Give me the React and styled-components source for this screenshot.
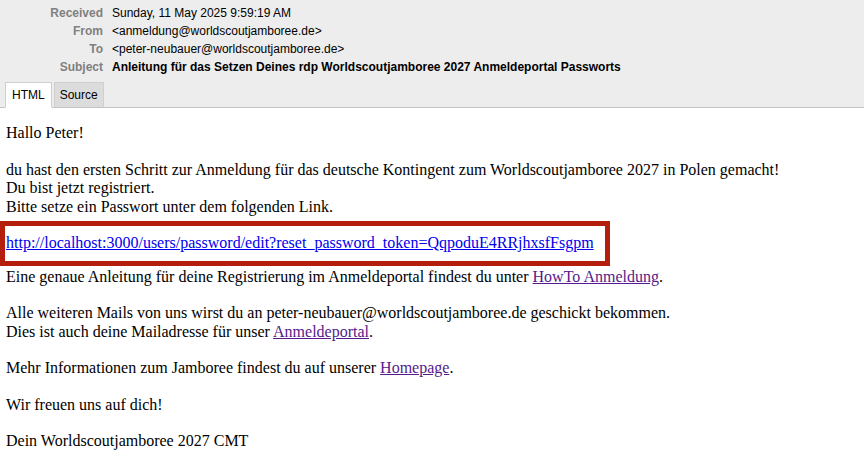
import styled, { createGlobalStyle } from "styled-components";

const GlobalStyle = createGlobalStyle`
  html, body {
    margin: 0;
    padding: 0;
    background: #ffffff;
  }
`;

const Page = styled.div`
  width: 100%;
  min-height: 465px;
  background: #ffffff;
`;

const Header = styled.header`
  background: #ededed;
  border-bottom: 1px solid #c4c4c4;
  padding-top: 4px;
  font-family: "Liberation Sans", Arial, sans-serif;
  font-size: 12px;
`;

const FieldList = styled.div`
  display: grid;
  grid-template-columns: 103px 1fr;
  column-gap: 9px;
`;

const FieldLabel = styled.div`
  text-align: right;
  color: #808080;
  font-weight: bold;
  line-height: 18px;
`;

const FieldValue = styled.div`
  color: #000;
  line-height: 18px;
  font-weight: ${(p) => (p.$bold ? "bold" : "normal")};
`;

const Tabs = styled.div`
  display: flex;
  gap: 2px;
  padding: 6px 0 0 5px;
  margin-bottom: -1px;
`;

const Tab = styled.div`
  height: 24px;
  line-height: 24px;
  padding: 0 ${(p) => (p.$active ? "6px" : "5px")};
  border: 1px solid #cfcfcf;
  border-bottom: ${(p) => (p.$active ? "1px solid #ffffff" : "1px solid #c4c4c4")};
  background: ${(p) => (p.$active ? "#ffffff" : "#dcdcdc")};
  color: #000;
`;

const Body = styled.main`
  padding: 16px 6px 0 6px;
  font-family: "Liberation Serif", "Times New Roman", serif;
  font-size: 16px;
  line-height: 18.5px;
  color: #000;
`;

const Para = styled.p`
  margin: 0 0 ${(p) => (p.$tight ? "0" : "18px")} 0;
`;

const LinkBox = styled.div`
  border: 5px solid #b51d0d;
  margin: 5px 0 2px -6px;
  padding: 8px 1px;
  width: 598px;
`;

const Link = styled.a`
  color: ${(p) => (p.$visited ? "#551a8b" : "#0000ee")};
  text-decoration: underline;
`;

const fields = [
  { label: "Received", value: "Sunday, 11 May 2025 9:59:19 AM" },
  { label: "From", value: "<anmeldung@worldscoutjamboree.de>" },
  { label: "To", value: "<peter-neubauer@worldscoutjamboree.de>" },
  {
    label: "Subject",
    value:
      "Anleitung für das Setzen Deines rdp Worldscoutjamboree 2027 Anmeldeportal Passworts",
    bold: true,
  },
];

export default function App() {
  return (
    <Page>
      <GlobalStyle />
      <Header>
        <FieldList>
          {fields.map((f) => [
            <FieldLabel key={f.label + "-l"}>{f.label}</FieldLabel>,
            <FieldValue key={f.label + "-v"} $bold={f.bold}>
              {f.value}
            </FieldValue>,
          ])}
        </FieldList>
        <Tabs>
          <Tab $active>HTML</Tab>
          <Tab>Source</Tab>
        </Tabs>
      </Header>

      <Body>
        <Para>Hallo Peter!</Para>
        <Para $tight>
          du hast den ersten Schritt zur Anmeldung für das deutsche Kontingent
          zum Worldscoutjamboree 2027 in Polen gemacht!
          <br />
          Du bist jetzt registriert.
          <br />
          Bitte setze ein Passwort unter dem folgenden Link.
        </Para>
        <LinkBox>
          <Link href="#">
            http://localhost:3000/users/password/edit?reset_password_token=QqpoduE4RRjhxsfFsgpm
          </Link>
        </LinkBox>
        <Para>
          Eine genaue Anleitung für deine Registrierung im Anmeldeportal
          findest du unter <Link $visited href="#">HowTo Anmeldung</Link>.
        </Para>
        <Para>
          Alle weiteren Mails von uns wirst du an
          peter-neubauer@worldscoutjamboree.de geschickt bekommen.
          <br />
          Dies ist auch deine Mailadresse für unser{" "}
          <Link $visited href="#">Anmeldeportal</Link>.
        </Para>
        <Para>
          Mehr Informationen zum Jamboree findest du auf unserer{" "}
          <Link $visited href="#">Homepage</Link>.
        </Para>
        <Para>Wir freuen uns auf dich!</Para>
        <Para>Dein Worldscoutjamboree 2027 CMT</Para>
      </Body>
    </Page>
  );
}
